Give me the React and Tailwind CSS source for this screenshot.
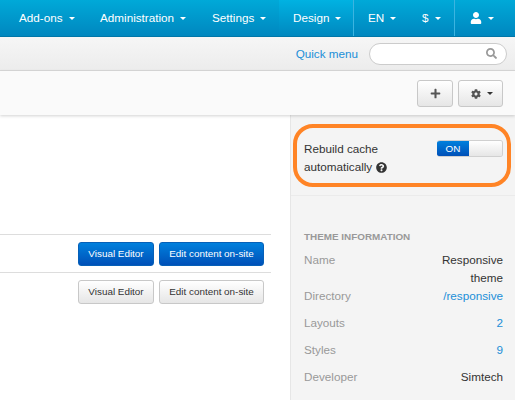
import React from 'react';
import { FaSearch, FaPlus, FaCog, FaUser, FaQuestionCircle } from 'react-icons/fa';

const Caret = ({ className = 'border-t-white' }) => (
  <span className={`ml-[6px] inline-block w-0 h-0 border-x-[3px] border-x-transparent border-t-[3px] ${className}`} />
);

const NavItem = ({ label, className = '' }) => (
  <div className={`flex items-center h-full text-white ${className}`}>
    {label}
    <Caret />
  </div>
);

const InfoRow = ({ label, value, link, className = '' }) => (
  <div className={`flex justify-between leading-[18px] ${className}`}>
    <span className="text-[#999999]">{label}</span>
    <span className={`text-right w-[70px] shrink-0 whitespace-pre-line ${link ? 'text-[#1b8fd8]' : 'text-[#333333]'}`}>{value}</span>
  </div>
);

const EditorRow = ({ primary }) => {
  const base = 'h-[24px] rounded-[3px] border text-[9.9px] flex items-center justify-center';
  const tone = primary
    ? 'bg-gradient-to-b from-[#0080dd] to-[#0050b8] border-[#0660b8] text-white'
    : 'bg-gradient-to-b from-white to-[#e6e6e6] border-[#c8c8c8] text-[#333333]';
  return (
    <div className="h-[38px] border-t border-[#dddddd] flex justify-end items-start gap-[5px] pt-[7px] pr-[7px]">
      <button className={`${base} ${tone} w-[76px]`}>Visual Editor</button>
      <button className={`${base} ${tone} w-[105px]`}>Edit content on-site</button>
    </div>
  );
};

export default function App() {
  return (
    <div className="w-[515px] h-[400px] overflow-hidden relative bg-white text-[11.7px] font-['Liberation_Sans',Arial,sans-serif]">
      <nav className="h-[37px] flex bg-gradient-to-b from-[#00a9d8] to-[#0087bf] border-b border-[#0077a8]">
        <NavItem label="Add-ons" className="pl-[19px] w-[100px]" />
        <NavItem label="Administration" className="w-[112px]" />
        <NavItem label="Settings" className="w-[67px]" />
        <NavItem label="Design" className="w-[75px] pl-[14px] bg-gradient-to-b from-[#00b2e2] to-[#0088bf] border-r border-[#3cb4e0]" />
        <NavItem label="EN" className="w-[54px] pl-[14px]" />
        <NavItem label="$" className="w-[47px] pl-[14px] border-r border-[#3cb4e0]" />
        <div className="flex items-center pl-[15px]">
          <FaUser size={12} className="text-white" />
          <Caret className="border-t-white ml-[5px]" />
        </div>
      </nav>

      <div className="h-[34px] flex justify-end items-center gap-[11px] pr-[8px] bg-gradient-to-b from-[#f6f6f6] to-[#ececec] border-b border-[#d9d9d9]">
        <span className="text-[#1b8fd8]">Quick menu</span>
        <div className="w-[138px] h-[22px] rounded-full bg-white border border-[#cccccc] flex justify-end items-center pr-[9px]">
          <FaSearch size={11} className="text-[#999999]" />
        </div>
      </div>

      <div className="h-[44px] flex justify-end items-start gap-[5px] pt-[9px] pr-[12px] bg-[#fafafa] shadow-[0_1px_3px_rgba(0,0,0,0.18)] relative">
        <button className="w-[36px] h-[27px] rounded-[3px] border border-[#c8c8c8] bg-gradient-to-b from-white to-[#e6e6e6] flex items-center justify-center">
          <FaPlus size={11} className="text-[#555555]" />
        </button>
        <button className="w-[45px] h-[27px] rounded-[3px] border border-[#c8c8c8] bg-gradient-to-b from-white to-[#e6e6e6] flex items-center justify-center pl-[3px]">
          <FaCog size={10} className="text-[#555555]" />
          <Caret className="border-t-[#333333] ml-[5px]" />
        </button>
      </div>

      <div className="flex h-[285px]">
        <main className="w-[290px] pr-[19px] pt-[119px]">
          <EditorRow primary />
          <EditorRow />
        </main>
        <aside className="flex-1 bg-[#f4f4f4] border-l border-[#e6e6e6] pl-[13px] pr-[12px] text-[#333333]">
          <div className="h-[81px] pt-[25px] flex justify-between items-start border-b border-[#ebebeb] -ml-[13px] -mr-[12px] pl-[13px] pr-[12px] leading-[18px]">
            <div>
              Rebuild cache
              <div className="flex items-center gap-[4px]">
                automatically
                <FaQuestionCircle size={11} className="text-[#333333]" />
              </div>
            </div>
            <div className="flex w-[66px] h-[17px] rounded-[3px] overflow-hidden border border-[#d0d0d0] border-l-0 text-[9.9px]">
              <span className="w-[32px] bg-gradient-to-b from-[#0080dd] to-[#0050b8] text-white text-center leading-[15px]">ON</span>
              <span className="flex-1 bg-gradient-to-b from-white to-[#e6e6e6]" />
            </div>
          </div>
          <h4 className="pt-[35px] text-[9.9px] leading-[12px] font-bold text-[#999999] uppercase">Theme information</h4>
          <InfoRow label="Name" value={'Responsive\ntheme'} className="mt-[8px]" />
          <InfoRow label="Directory" value="/responsive" link />
          <InfoRow label="Layouts" value="2" link className="mt-[9px]" />
          <InfoRow label="Styles" value="9" link className="mt-[9px]" />
          <InfoRow label="Developer" value="Simtech" className="mt-[9px]" />
        </aside>
      </div>

      {/* orange annotation over the switch */}
      <div className="absolute left-[293px] top-[124px] w-[218px] h-[63px] rounded-[20px] border-[4px] border-[#ff8426]" />
    </div>
  );
}
